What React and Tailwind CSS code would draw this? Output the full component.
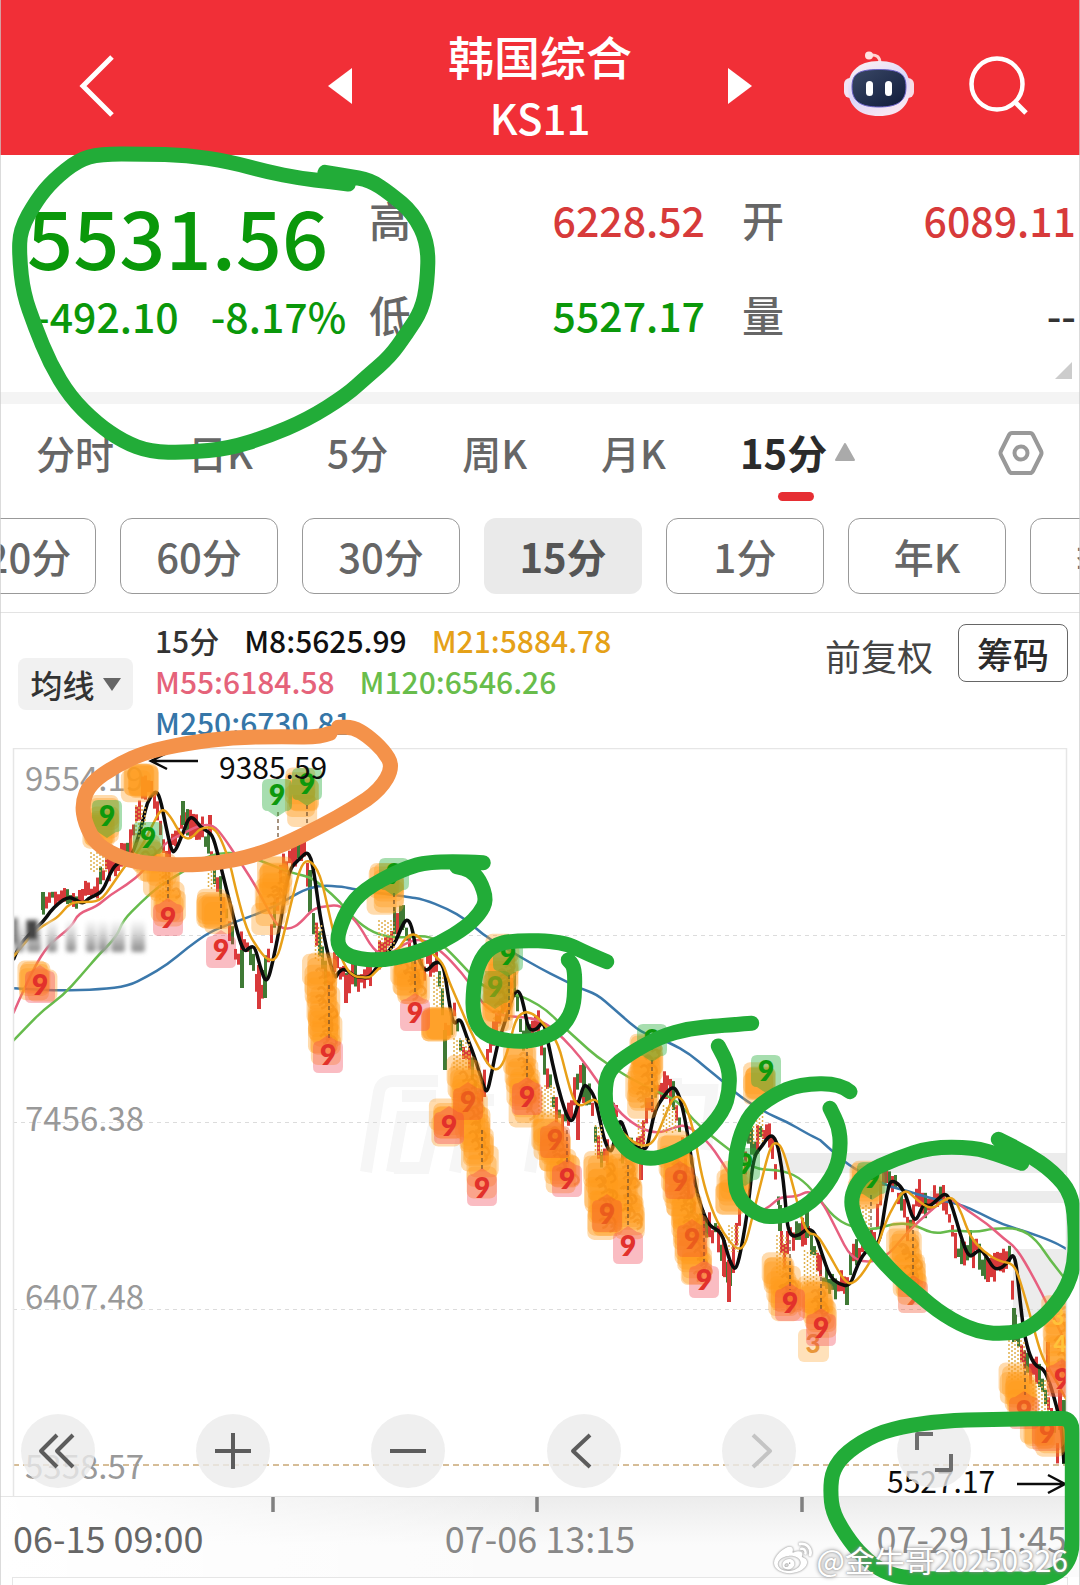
import React from "react";
import { FaWeibo } from "react-icons/fa";

/* ---------- chart data ---------- */

// Every run is stored as [originX, originY, [x, y, ...]] with three units per chart pixel.
const join = (...runs) =>
  runs.flatMap(([ox, oy, list]) => {
    const out = [];
    for (let i = 0; i < list.length; i += 2) out.push([ox + list[i] / 3, oy + list[i + 1] / 3]);
    return out;
  });

// Smooth curve through the midpoints of a polyline.
const smooth = (pts) => {
  let d = `M${pts[0][0].toFixed(1)} ${pts[0][1].toFixed(1)}`;
  for (let i = 1; i < pts.length - 1; i++) {
    const mx = (pts[i][0] + pts[i + 1][0]) / 2;
    const my = (pts[i][1] + pts[i + 1][1]) / 2;
    d += `Q${pts[i][0].toFixed(1)} ${pts[i][1].toFixed(1)} ${mx.toFixed(1)} ${my.toFixed(1)}`;
  }
  const last = pts[pts.length - 1];
  return d + `L${last[0].toFixed(1)} ${last[1].toFixed(1)}`;
};

const M8 = join(
  [0, 730, [40, 690, 55, 650, 90, 610, 130, 575, 150, 545, 175, 520, 205, 500, 225, 508, 250, 522, 265, 505, 290, 495, 310, 480, 330, 430, 350, 400, 378, 392, 400, 370, 430, 270, 440, 220, 465, 180, 480, 200, 500, 300, 515, 365, 525, 365, 545, 320, 565, 265, 580, 262, 600, 290, 625, 305, 640, 320, 660, 400, 680, 480, 700, 560, 730, 670, 750, 650, 765, 650, 780, 710, 800, 765, 820, 690, 845, 560, 865, 420, 900, 385, 925, 362, 940, 410, 960, 560, 985, 680, 1005, 750, 1015, 725, 1035, 715, 1065, 740]],
  [300, 830, [180, 440, 205, 445, 225, 420, 260, 370, 285, 340, 305, 290, 320, 265, 335, 285, 350, 370, 370, 420, 385, 420, 405, 395, 430, 400, 445, 500, 460, 590, 480, 560, 500, 620, 520, 670, 545, 750, 560, 795, 575, 730, 590, 650, 620, 560, 640, 490, 658, 480, 672, 530, 685, 600, 710, 600, 730, 570, 745, 640, 770, 760, 800, 860, 818, 878, 835, 820, 850, 768]],
  [580, 980, [20, 315, 45, 350, 60, 420, 75, 490, 95, 522, 105, 470, 120, 415, 135, 450, 150, 500, 180, 500, 200, 510, 210, 460, 225, 390, 250, 350, 275, 320, 290, 330, 305, 370, 325, 470, 345, 620, 370, 700, 390, 740, 425, 755, 445, 830, 460, 865, 470, 865, 485, 800, 505, 680, 520, 530, 545, 500, 570, 462, 590, 480, 605, 560, 615, 650, 622, 740, 635, 770, 660, 765, 680, 745, 705, 755, 725, 820, 750, 890, 775, 912, 810, 920, 830, 860]],
  [820, 1100, [135, 455, 165, 435, 180, 420, 190, 350, 205, 260, 215, 240, 240, 255, 260, 290, 275, 350, 290, 362, 310, 310, 330, 320, 350, 300, 380, 275, 400, 330, 420, 400, 440, 460, 455, 470, 480, 445, 500, 470, 520, 505, 540, 508, 565, 485, 580, 460, 590, 500, 600, 600, 612, 700, 630, 770, 650, 800, 670, 805, 690, 850, 710, 920, 725, 985, 732, 1090]]
);

const M21 = join(
  [0, 730, [40, 680, 60, 655, 110, 600, 150, 575, 175, 560, 210, 518, 250, 515, 300, 515, 340, 460, 380, 400, 420, 360, 460, 280, 480, 242, 495, 240, 515, 265, 540, 310, 560, 328, 580, 320, 600, 295, 640, 290, 665, 330, 690, 400, 710, 490, 740, 600, 770, 650, 800, 690, 830, 690, 850, 620, 880, 490, 905, 400, 930, 390, 960, 430, 985, 540, 1010, 650, 1040, 720, 1065, 740]],
  [300, 830, [180, 440, 210, 445, 235, 415, 270, 390, 300, 350, 320, 320, 345, 310, 370, 335, 395, 370, 430, 400, 445, 450, 480, 530, 510, 600, 540, 660, 570, 715, 600, 720, 625, 660, 645, 570, 670, 545, 700, 550, 740, 590, 775, 640, 800, 740, 820, 810, 840, 830, 865, 815]],
  [580, 980, [50, 355, 90, 420, 160, 490, 200, 500, 225, 480, 250, 420, 280, 350, 300, 350, 320, 380, 345, 470, 365, 590, 395, 690, 430, 760, 470, 810, 495, 800, 515, 720, 540, 620, 570, 500, 590, 485, 610, 510, 640, 620, 665, 720, 685, 762, 710, 762, 740, 810, 790, 900, 815, 915]],
  [820, 1100, [130, 520, 170, 450, 195, 370, 225, 310, 255, 265, 290, 300, 335, 330, 370, 300, 400, 290, 425, 340, 450, 410, 490, 455, 540, 485, 580, 490, 600, 540, 640, 680, 665, 770, 690, 810, 740, 900]]
);

const M55 = join(
  [0, 730, [40, 850, 75, 770, 115, 690, 150, 640, 215, 590, 235, 550, 290, 530, 330, 495, 380, 465, 430, 425, 490, 340, 560, 305, 600, 285, 640, 285, 670, 320, 710, 380, 750, 440, 790, 510, 830, 590, 870, 598, 900, 580, 940, 535, 980, 528, 1020, 525]],
  [300, 830, [150, 255, 180, 290, 220, 360, 260, 380, 330, 330, 380, 330, 430, 370, 460, 400, 510, 460, 560, 540, 620, 560, 680, 560, 740, 580, 790, 625, 840, 680]],
  [580, 980, [50, 300, 110, 390, 170, 440, 230, 462, 290, 440, 320, 435, 380, 480, 430, 550, 480, 640, 530, 700, 570, 680, 600, 650, 650, 650, 690, 630, 730, 670, 770, 750]],
  [820, 1100, [95, 478, 160, 488, 210, 460, 250, 410, 300, 360, 340, 325, 385, 290, 440, 330, 500, 370, 550, 415, 590, 445, 640, 530, 690, 630, 742, 740]]
);

const M120 = join(
  [0, 730, [40, 932, 80, 890, 130, 840, 190, 795, 240, 740, 300, 670, 350, 620, 370, 570, 420, 520, 480, 465, 550, 425, 610, 385, 660, 368, 720, 370, 790, 395, 870, 428, 930, 440, 970, 470]],
  [300, 830, [120, 215, 160, 265, 220, 310, 290, 325, 390, 315, 440, 355, 500, 420, 560, 480, 640, 490, 690, 510, 740, 540, 790, 590]],
  [580, 980, [0, 185, 50, 230, 110, 270, 160, 300, 230, 335, 290, 360, 340, 420, 390, 465, 450, 510, 520, 568, 610, 570, 670, 600]],
  [820, 1100, [0, 300, 40, 350, 90, 380, 160, 390, 220, 370, 280, 372, 340, 403, 400, 390, 470, 397, 520, 385, 600, 385, 650, 420, 690, 480, 742, 545]]
);

const M250 = join(
  [0, 730, [40, 775, 100, 778, 180, 782, 300, 778, 385, 768, 440, 740, 500, 705, 560, 655, 630, 605, 700, 578, 790, 545, 850, 515, 910, 480, 960, 466, 1030, 470]],
  [300, 830, [160, 178, 320, 200, 370, 208, 440, 235, 500, 270, 550, 315, 600, 345, 660, 380, 720, 415, 780, 445]],
  [580, 980, [0, 25, 50, 42, 100, 85, 150, 130, 190, 160, 270, 188, 330, 222, 380, 265, 430, 305, 480, 350, 560, 400, 620, 425, 680, 460, 720, 480]],
  [820, 1100, [0, 120, 50, 165, 100, 205, 200, 258, 260, 272, 330, 295, 420, 312, 480, 340, 550, 375, 620, 395, 700, 425, 742, 448]]
);

const noise = (n) => {
  const s = Math.sin(n * 127.1 + 11.7) * 43758.5453;
  return s - Math.floor(s);
};

const valueAt = (pts, x) => {
  for (let i = 1; i < pts.length; i++) {
    if (pts[i][0] >= x) {
      const [x0, y0] = pts[i - 1];
      const [x1, y1] = pts[i];
      return y0 + ((y1 - y0) * (x - x0)) / (x1 - x0 || 1);
    }
  }
  return pts[pts.length - 1][1];
};

const candles = [];
for (let i = 0, x = 42; x < 1058; x += 3, i++) {
  const now = valueAt(M8, x + 5);
  const slope = valueAt(M8, x + 7) - valueAt(M8, x + 3);
  const calm = x < 95;
  const h = calm ? 5 + noise(i) * 10 : 8 + noise(i) * 21;
  const mid = now + slope * 0.9 + (noise(i + 500) - 0.5) * (calm ? 8 : 14) - (calm ? 4 : 0);
  const red = noise(i + 900) > (slope < 0 ? 0.2 : 0.5);
  candles.push({ x, y: mid - h / 2, h, red });
}

const spikes = [
  [43, 892, 18, 0], [183, 801, 24, 0], [210, 815, 18, 1], [242, 950, 38, 0], [259, 965, 44, 1],
  [265, 970, 28, 0], [310, 870, 42, 0], [346, 975, 28, 1], [445, 1030, 40, 0], [578, 1100, 40, 1],
  [584, 1063, 34, 0], [666, 1077, 22, 1], [641, 1160, 20, 1], [729, 1260, 42, 1], [724, 1240, 36, 1],
  [847, 1285, 20, 0], [780, 1205, 26, 0], [807, 1210, 28, 0], [1014, 1308, 34, 0], [1048, 1342, 30, 1],
  [1064, 1400, 64, 0], [1060, 1390, 40, 1], [988, 1260, 22, 1], [402, 908, 22, 0],
];

// Stacked signal tags: from (x1, y1) to (x2, y2).
const stacks = [
  [31, 974, 39, 984, 5], [105, 812, 101, 832, 5], [97, 834, 100, 828, 2], [142, 778, 138, 784, 6],
  [145, 848, 166, 888, 9], [168, 900, 169, 914, 4], [213, 907, 216, 915, 7], [303, 782, 300, 808, 6],
  [276, 873, 272, 895, 9], [270, 900, 267, 916, 3], [319, 968, 326, 1046, 18], [388, 878, 385, 898, 7],
  [406, 965, 412, 990, 9], [440, 1022, 438, 1028, 6], [502, 952, 497, 1018, 15], [463, 1072, 478, 1152, 20],
  [480, 1150, 481, 1180, 4], [446, 1117, 449, 1127, 5], [520, 1054, 527, 1110, 13], [546, 1127, 564, 1176, 15],
  [600, 1167, 605, 1226, 16], [622, 1160, 629, 1222, 15], [648, 1048, 641, 1100, 13], [672, 1146, 698, 1272, 30],
  [758, 1080, 757, 1087, 5], [733, 1180, 731, 1199, 7], [780, 1267, 787, 1305, 11], [813, 1290, 819, 1320, 9],
  [867, 1174, 866, 1194, 7], [903, 1240, 912, 1288, 12], [1058, 1312, 1061, 1380, 12], [1016, 1380, 1021, 1404, 8],
  [1038, 1425, 1052, 1440, 7],
];

const tags = [
  [40, 986, "9", "r"], [168, 919, "9", "r"], [221, 951, "9", "r"], [328, 1056, "9", "r"], [415, 1014, "9", "r"],
  [449, 1127, "9", "r"], [482, 1189, "9", "r"], [527, 1098, "9", "r"], [555, 1141, "9", "f"], [567, 1180, "9", "r"],
  [468, 1103, "9", "f"], [607, 1215, "9", "f"], [628, 1247, "9", "r"], [680, 1182, "9", "f"], [692, 1240, "9", "f"],
  [704, 1281, "9", "r"], [790, 1304, "9", "r"], [821, 1329, "9", "r"], [913, 1296, "9", "f"], [1062, 1380, "9", "r"],
  [1024, 1412, "9", "f"], [1047, 1434, "9", "f"],
  [107, 817, "9", "g"], [148, 839, "9", "g"], [277, 796, "9", "g"], [307, 785, "9", "g"], [394, 875, "9", "g"],
  [508, 956, "9", "g"], [495, 988, "9", "h"], [652, 1041, "9", "g"], [766, 1072, "9", "g"], [745, 1165, "9", "g"],
  [872, 1179, "9", "g"],
];

const tagStyle = {
  r: { fill: "#ef3b4b", op: 0.34, ink: "#e2312b", inkOp: 1 },
  f: { fill: "#f0502d", op: 0.36, ink: "#e8531c", inkOp: 0.8 },
  g: { fill: "#22ac38", op: 0.4, ink: "#0d990d", inkOp: 1 },
  h: { fill: "#55a020", op: 0.35, ink: "#5b9a12", inkOp: 0.7 },
};

const dotted = [
  [100, 852, 20, 6], [142, 805, 30, 4], [213, 865, 22, 3], [320, 925, 36, 3], [388, 920, 30, 6],
  [440, 975, 30, 4], [463, 1038, 30, 6], [548, 1085, 30, 6], [600, 1125, 30, 3], [643, 1120, 28, 3],
  [671, 1105, 28, 5], [758, 1108, 36, 5], [735, 1225, 25, 4], [783, 1235, 38, 4], [812, 1250, 34, 5],
  [1018, 1340, 40, 6], [1042, 1380, 40, 6], [866, 1205, 26, 4], [166, 870, 30, 4],
];

const leaders = [
  [278, 812, 852], [307, 805, 835], [168, 880, 900], [221, 890, 930], [329, 985, 1038], [394, 893, 925],
  [415, 960, 995], [482, 1130, 1170], [509, 975, 1020], [527, 1045, 1080], [567, 1130, 1162], [628, 1165, 1228],
  [652, 1060, 1110], [704, 1210, 1262], [790, 1240, 1290], [821, 1270, 1310], [871, 1195, 1235], [913, 1230, 1275],
  [1025, 1350, 1395],
];

const Chart = () => (
  <svg viewBox="0 748 1080 748" className="block w-full" role="img" aria-label="15分 K线图">
    <defs>
      <clipPath id="plot">
        <rect x="13" y="748" width="1054" height="748" />
      </clipPath>
      <filter id="smudge" x="-20%" y="-20%" width="140%" height="140%">
        <feGaussianBlur stdDeviation="2" />
      </filter>
      <linearGradient id="fade" x1="0" y1="0" x2="0" y2="1">
        <stop offset="0" stopColor="#f4f4f4" stopOpacity="0.6" />
        <stop offset="0.7" stopColor="#b0b0b0" />
        <stop offset="1" stopColor="#8c8c8c" />
      </linearGradient>
    </defs>

    <g fill="none" stroke="#f6f6f6" strokeWidth="12">
      <path d="M366 1172L379 1092Q381 1081 393 1081H438M392 1172L402 1117H436L424 1168H394M402 1096H436M455 1172L468 1108Q470 1100 480 1100H494M530 1172L540 1110M660 1090H712L706 1150M676 1078V1106" />
    </g>

    <g fill="#ececec">
      <rect x="780" y="1153" width="287" height="20" />
      <rect x="930" y="1191" width="137" height="12" />
      <rect x="1013" y="1249" width="54" height="68" />
    </g>

    <g stroke="#dcdcdc" strokeWidth="1" strokeDasharray="4 4">
      <path d="M13 935.500H1067M13 1122.500H1067M13 1309.500H1067" />
    </g>
    <path d="M13 1465H1067" stroke="#c9a876" strokeWidth="1.500" strokeDasharray="6 4" />

    <g fontFamily="Noto Sans CJK SC, sans-serif" fontSize="33" fill="#999999">
      <text x="25" y="791">9554.19</text>
      <text x="25" y="1131">7456.38</text>
      <text x="25" y="1309">6407.48</text>
      <text x="25" y="1479">5358.57</text>
    </g>

    <g clipPath="url(#plot)">
      {candles.map((c) => (
        <rect key={c.x} x={c.x} y={c.y} width="3" height={c.h} fill={c.red ? "#d8393a" : "#3f7a35"} />
      ))}
      {spikes.map(([x, y, h, red]) => (
        <rect key={x + "-" + y} x={x - 2} y={y} width="4" height={h} fill={red ? "#d8393a" : "#3f7a35"} />
      ))}

      <g fill="none" strokeLinejoin="round">
        <path d={smooth(M250)} stroke="#3b78ab" strokeWidth="2.500" />
        <path d={smooth(M120)} stroke="#66bb4c" strokeWidth="2.500" />
        <path d={smooth(M55)} stroke="#e75f7f" strokeWidth="2.500" />
        <path d={smooth(M8)} stroke="#0c0c0c" strokeWidth="3.500" />
        <path d={smooth(M21)} stroke="#e8a018" strokeWidth="2.500" />
      </g>

      <g filter="url(#smudge)">
        {[14, 27, 47, 66, 86, 98, 111, 131].map((x, i) => (
          <rect key={x} x={x} y="921" width={i === 1 ? 14 : i > 5 ? 14 : 10} height="31" rx="3" fill="url(#fade)" />
        ))}
        <rect x="12" y="918" width="6" height="26" fill="#777777" />
        <rect x="26" y="920" width="12" height="20" fill="#444444" />
      </g>

      {dotted.map(([x, y, h, n]) => (
        <g key={x + "-" + y}>
          {Array.from({ length: n }, (_, i) => (
            <path
              key={i}
              d={`M${x - n * 1.5 + i * 3} ${y + (i % 2) * 2}v${h}`}
              stroke="#dfb04c"
              strokeWidth="1.500"
              strokeDasharray="2 2"
            />
          ))}
        </g>
      ))}

      {stacks.map(([x1, y1, x2, y2, n], s) => (
        <g key={s} fill="#ff9a1c" fillOpacity="0.36">
          {Array.from({ length: n }, (_, i) => {
            const t = n > 1 ? i / (n - 1) : 0;
            const dx = (noise(s * 31 + i) - 0.5) * 7;
            const dy = (noise(s * 53 + i + 7) - 0.5) * 7;
            return (
              <rect
                key={i}
                x={x1 + (x2 - x1) * t - 15 + dx}
                y={y1 + (y2 - y1) * t - 16 + dy}
                width="30"
                height="32"
                rx="7"
              />
            );
          })}
        </g>
      ))}

      <g fill="none" stroke="#f08a10" strokeWidth="2.500" strokeOpacity="0.45">
        {stacks
          .filter((s) => s[4] > 8)
          .map(([x1, y1, x2, y2, n], s) => (
            <path
              key={s}
              d={Array.from({ length: n }, (_, i) => {
                const t = i / (n - 1);
                const x = x1 + (x2 - x1) * t + (noise(s + i * 3) - 0.5) * 14;
                const y = y1 + (y2 - y1) * t + (noise(s * 2 + i) - 0.5) * 6;
                return `M${x.toFixed(1)} ${y.toFixed(1)}q4 -5 7 0t-4 7`;
              }).join("")}
            />
          ))}
      </g>

      <g stroke="#6b4a28" strokeWidth="1.200" strokeDasharray="4 3">
        {leaders.map(([x, a, b]) => (
          <path key={x + "-" + a} d={`M${x} ${a}V${b}`} />
        ))}
      </g>

      <g fontFamily="Lato, Noto Sans CJK SC, sans-serif" fontWeight="900" textAnchor="middle">
        <g>
          <rect x="798" y="1329" width="31" height="33" rx="6" fill="#ff9a1c" fillOpacity="0.300" />
          <text x="813" y="1353" fontSize="26" fill="#e9973a">3</text>
        </g>
        {tags.map(([x, y, label, kind]) => {
          const t = tagStyle[kind];
          return (
            <g key={x + "-" + y}>
              <path
                d={
                  kind === "g" || kind === "h"
                    ? `M${x - 9} ${y - 17}h18q6 0 6 6v20q0 6-6 6l-9 6l-9-6q-6 0-6-6v-20q0-6 6-6z`
                    : `M${x - 9} ${y - 15}l9-6l9 6q6 0 6 6v20q0 6-6 6h-18q-6 0-6-6v-20q0-6 6-6z`
                }
                fill={t.fill}
                fillOpacity={t.op}
              />
              <text x={x} y={y + 9} fontSize="28" fontWeight="800" fill={t.ink} fillOpacity={t.inkOp}>
                {label}
              </text>
            </g>
          );
        })}
        <text x="1058" y="1325" fontSize="22" fill="#ffc23a">3</text>
        <text x="1060" y="1352" fontSize="22" fill="#ffc23a">4</text>
      </g>
    </g>

    <g fill="none" stroke="#0c0c0c" strokeWidth="2.500">
      <path d="M198 761H151M167 753L151 761L167 769" />
      <path d="M1017 1484H1065M1048 1475L1065 1484L1048 1493" />
    </g>
    <g fontFamily="Noto Sans CJK SC, sans-serif" fontSize="30" fill="#0c0c0c">
      <text x="219" y="779">9385.59</text>
      <text x="887" y="1493">5527.17</text>
    </g>

    <path d="M13.500 1496V748.500H1066.500V1496" fill="none" stroke="#e6e6e6" strokeWidth="1.500" />
  </svg>
);

/* ---------- hand-drawn marks ---------- */

const marks = [
  join([0, 140, [1045, 132, 990, 125, 900, 115, 800, 95, 690, 65, 560, 45, 430, 42, 300, 42, 235, 60, 160, 120, 110, 180, 60, 270, 58, 350, 70, 460, 105, 560, 150, 670, 210, 770, 290, 850, 370, 905, 450, 935, 560, 938, 690, 925, 800, 890, 920, 840, 1040, 765, 1100, 710, 1170, 650, 1220, 580, 1265, 510, 1282, 430, 1285, 310, 1240, 220, 1170, 160, 1110, 120, 1040, 108, 975, 97]]),
  join([300, 830, [550, 98, 400, 90, 300, 120, 190, 180, 140, 240, 110, 320, 120, 360, 160, 385, 240, 392, 330, 375, 420, 340, 500, 290, 540, 250, 560, 210, 540, 150, 510, 120, 470, 110]]),
  join([300, 830, [920, 395, 860, 370, 790, 335, 640, 330, 570, 350, 535, 400, 520, 470, 518, 560, 550, 615, 630, 635, 710, 632, 780, 600, 820, 540, 825, 460, 822, 410, 805, 390]]),
  join([580, 980, [515, 130, 420, 137, 330, 145, 240, 170, 150, 220, 85, 270, 73, 340, 85, 420, 135, 510, 200, 540, 270, 525, 360, 475, 430, 395, 449, 330, 447, 260, 415, 198]]),
  join([580, 980, [810, 335, 780, 310, 660, 312, 580, 345, 510, 400, 475, 480, 463, 570, 470, 650, 530, 705, 590, 712, 640, 700, 710, 655, 770, 570, 782, 500, 777, 440, 750, 385]]),
  join([820, 1100, [605, 190, 540, 165, 460, 142, 330, 142, 230, 175, 130, 220, 90, 290, 105, 360, 150, 440, 220, 520, 290, 580, 370, 645, 470, 697, 570, 702, 640, 680, 720, 600, 762, 510, 767, 400, 757, 285, 700, 215, 620, 160, 535, 118]]),
  join([820, 1100, [757, 1000, 757, 956, 700, 955, 560, 958, 400, 960, 270, 975, 170, 1000, 80, 1055, 38, 1110, 31, 1170, 38, 1240, 90, 1325, 140, 1380, 190, 1415, 260, 1436, 500, 1438, 757, 1436, 757, 1200, 757, 1000]]),
];

const orangeMark = join([0, 730, [990, 10, 960, 22, 850, 20, 700, 22, 560, 40, 440, 65, 350, 105, 270, 160, 246, 220, 255, 280, 290, 345, 370, 388, 450, 402, 560, 405, 650, 400, 750, 380, 850, 345, 960, 290, 1060, 235, 1140, 180, 1180, 110, 1150, 60, 1100, 15, 1060, -8, 1015, -8]]);

const Marks = () => (
  <svg
    viewBox="0 0 1080 1585"
    preserveAspectRatio="none"
    className="pointer-events-none absolute inset-0 h-full w-full"
    aria-hidden="true"
  >
    <g fill="none" strokeWidth="15" strokeLinecap="round" strokeLinejoin="round">
      {marks.map((m, i) => (
        <path key={i} d={smooth(m)} stroke="#22ac38" />
      ))}
      <path d={smooth(orangeMark)} stroke="#f4924a" />
    </g>
  </svg>
);

/* ---------- icons ---------- */

const Robot = () => (
  <svg viewBox="0 0 72 66" className="h-[66px] w-[72px]" aria-hidden="true">
    <defs>
      <linearGradient id="shell" x1="0" y1="0" x2="0.500" y2="1">
        <stop offset="0" stopColor="#fff4f4" />
        <stop offset="0.600" stopColor="#dcd6f8" />
        <stop offset="1" stopColor="#f7e6f2" />
      </linearGradient>
      <linearGradient id="visor" x1="0" y1="0" x2="1" y2="1">
        <stop offset="0" stopColor="#3a4866" />
        <stop offset="1" stopColor="#101b3a" />
      </linearGradient>
    </defs>
    <path d="M27 4Q37 3 37 12" fill="none" stroke="#ffd3d3" strokeWidth="3" />
    <circle cx="26" cy="4.500" r="4" fill="#ffe3e3" />
    <rect x="1" y="27" width="12" height="20" rx="6" fill="#f3e3f3" />
    <rect x="59" y="27" width="12" height="20" rx="6" fill="#f7dce6" />
    <path d="M36 10C58 10 67 22 67 37C67 55 56 65 36 65C16 65 5 55 5 37C5 22 14 10 36 10Z" fill="url(#shell)" />
    <path d="M36 18.500C57 18.500 63 23 63 36C63 50 55 56 36 56C17 56 9 50 9 36C9 23 15 18.500 36 18.500Z" fill="url(#visor)" stroke="#6a62c8" strokeWidth="1" />
    <rect x="23" y="30" width="7" height="15" rx="3.500" fill="#fff" />
    <rect x="42" y="30" width="7" height="15" rx="3.500" fill="#fff" />
  </svg>
);

const toolIcons = [
  ["快退", "M36 21L20 37L36 53M52 21L36 37L52 53", "#5c5c5c"],
  ["放大", "M37 19V55M19 37H55", "#5c5c5c"],
  ["缩小", "M19 37H55", "#5c5c5c"],
  ["左移", "M43 21L26 37L43 53", "#5c5c5c"],
  ["右移", "M31 21L48 37L31 53", "#c4c4c4"],
  ["全屏", "M36 20H20V36M54 40V56H38", "#6e6e6e"],
];

const tabs = ["分时", "日K", "5分", "周K", "月K"];
const periods = ["120分", "60分", "30分", "15分", "1分", "年K", "季K"];

const Quote = ({ label, value, tone }) => (
  <div className="flex items-center justify-between">
    <dt className="text-[42px] text-[#666666]">{label}</dt>
    <dd className={tone}>{value}</dd>
  </div>
);

export default function App() {
  return (
    <main className="relative w-full overflow-hidden bg-white font-['Noto_Sans_CJK_SC',sans-serif] whitespace-nowrap after:pointer-events-none after:absolute after:inset-0 after:border-x after:border-[#cccccc]/70">
      <header className="flex h-[155px] items-center justify-between bg-[#f12f37] pt-4 pr-[51px] pl-[78px] text-white">
        <button type="button" aria-label="返回">
          <svg viewBox="0 0 38 62" className="h-[62px] w-[38px]" fill="none" stroke="#fff" strokeWidth="5">
            <path d="M34 2L5 31L34 60" />
          </svg>
        </button>
        <div className="ml-[121px] flex items-center gap-[96px]">
          <button type="button" aria-label="上一个">
            <svg viewBox="0 0 24 36" className="h-9 w-6" fill="#fff"><path d="M24 0V36L0 18Z" /></svg>
          </button>
          <h1 className="pt-px text-center text-[46px] leading-[62px] font-medium">
            韩国综合
            <span className="block text-[42px]">KS11</span>
          </h1>
          <button type="button" aria-label="下一个">
            <svg viewBox="0 0 24 36" className="h-9 w-6" fill="#fff"><path d="M0 0V36L24 18Z" /></svg>
          </button>
        </div>
        <div className="flex items-center gap-[54px]">
          <button type="button" aria-label="智能助手" className="pb-1"><Robot /></button>
          <button type="button" aria-label="搜索">
            <svg viewBox="0 0 60 60" className="size-[60px]" fill="none" stroke="#fff" strokeWidth="4.500">
              <circle cx="28" cy="28" r="25.500" />
              <path d="M46 46L57 57" strokeWidth="5" />
            </svg>
          </button>
        </div>
      </header>

      <section className="relative grid h-[237px] grid-cols-[305fr_336fr_338fr] gap-x-[37px] pt-8 pl-[27px] text-[41px] leading-[64px] font-medium">
        <div className="min-w-0 text-[#0a980a]">
          <p className="text-[81px] leading-[96px]">5531.56</p>
          <p className="flex gap-8 pl-2">
            <span>-492.10</span>
            <span>-8.17%</span>
          </p>
        </div>
        <dl className="space-y-[31px]">
          <Quote label="高" value="6228.52" tone="text-[#d73a3a]" />
          <Quote label="低" value="5527.17" tone="text-[#0a980a]" />
        </dl>
        <dl className="space-y-[31px] pr-1">
          <Quote label="开" value="6089.11" tone="text-[#d73a3a]" />
          <Quote label="量" value="--" tone="text-[#333333]" />
        </dl>
        <svg viewBox="0 0 17 17" className="absolute right-2 bottom-[13px] size-[17px]" fill="#cccccc" aria-hidden="true">
          <path d="M17 0V17H0Z" />
        </svg>
      </section>

      <div className="h-3 bg-[#f4f4f4]" />

      <nav className="flex h-[114px] items-start justify-between pt-5 pr-9 pl-9 text-[39px] leading-[56px] text-[#666666]">
        <div className="flex items-start gap-[74px]">
          {tabs.map((t) => (
            <button key={t} type="button" className="font-medium">{t}</button>
          ))}
          <button type="button" className="flex flex-col items-center font-bold text-[#2b2b2b]">
            <span className="flex items-center gap-2 text-[40px]">
              15分
              <svg viewBox="0 0 20 18" className="h-[18px] w-5" fill="#aaaaaa" stroke="#aaaaaa" strokeWidth="2" strokeLinejoin="round" aria-hidden="true">
                <path d="M10 1L19 17H1Z" />
              </svg>
            </span>
            <span className="mt-3 mr-1 h-[9px] w-9 rounded-full bg-[#e62e33]" />
          </button>
        </div>
        <button type="button" aria-label="设置" className="pt-[6px]">
          <svg viewBox="0 0 46 46" className="size-[46px]" fill="none" stroke="#999999" strokeWidth="4" strokeLinejoin="round">
            <path d="M14 3H32Q34 3 35 5L43 21Q44 23 43 25L35 41Q34 43 32 43H14Q12 43 11 41L3 25Q2 23 3 21L11 5Q12 3 14 3Z" />
            <circle cx="23" cy="23" r="6.500" />
          </svg>
        </button>
      </nav>

      <div className="-ml-[62px] flex h-[94px] gap-6 overflow-hidden">
        {periods.map((p) =>
          p === "15分" ? (
            <button key={p} type="button" aria-pressed="true" className="h-[76px] w-[158px] shrink-0 rounded-xl bg-[#eaeaea] text-[40px] font-bold text-[#555555]">{p}</button>
          ) : (
            <button key={p} type="button" className="h-[76px] w-[158px] shrink-0 rounded-xl border border-[#999999] text-[40px] font-medium text-[#666666]">{p}</button>
          )
        )}
      </div>

      <section className="flex h-[136px] items-start border-t border-[#e3e3e3] pr-3 pl-[18px]">
        <button type="button" aria-haspopup="listbox" className="mt-[45px] flex h-[52px] w-[115px] shrink-0 items-center justify-center gap-2 rounded-lg bg-[#f1f1f1] text-[32px] leading-[52px] font-medium text-[#333333]">
          均线
          <svg viewBox="0 0 18 13" className="h-[13px] w-[18px]" fill="#666666" aria-hidden="true"><path d="M0 0H18L9 13Z" /></svg>
        </button>
        <div className="ml-[22px] flex w-[480px] flex-wrap gap-x-[25px] pt-[7px] text-[30px] leading-[41px] font-medium">
          <span className="text-[#333333]">15分</span>
          <span className="text-[#111111]">M8:5625.99</span>
          <span className="text-[#e5a118]">M21:5884.78</span>
          <span className="text-[#e5637a]">M55:6184.58</span>
          <span className="text-[#68bd4b]">M120:6546.26</span>
          <span className="text-[#3576a8]">M250:6730.81</span>
        </div>
        <div className="mt-[11px] ml-auto flex items-center gap-[25px] text-[36px] leading-[54px] text-[#444444]">
          <span className="pt-1">前复权</span>
          <button type="button" className="h-[58px] w-[110px] rounded-lg border border-[#666666] font-medium text-[#2b2b2b]">筹码</button>
        </div>
      </section>

      <section className="relative">
        <Chart />
        <div className="absolute inset-x-0 bottom-2 flex justify-between pr-[109px] pl-[21px]">
          {toolIcons.map(([name, d, color]) => (
            <button key={name} type="button" aria-label={name} className="size-[74px] rounded-full bg-[#ebebeb]/80">
              <svg viewBox="0 0 74 74" className="size-[74px]" fill="none" stroke={color} strokeWidth="4" strokeLinejoin="round">
                <path d={d} />
              </svg>
            </button>
          ))}
        </div>
      </section>

      <section className="relative flex h-[81px] items-center justify-between border-t border-[#e6e6e6] bg-[linear-gradient(to_right,#ffffff,transparent_50%),linear-gradient(#ececec,#fbfbfb_60%)] px-[13px] text-[36px] text-[#888888]">
        <svg viewBox="0 0 1080 16" preserveAspectRatio="none" className="absolute inset-x-0 top-0 h-4 w-full" aria-hidden="true">
          <path d="M273 0V15M537 0V15M802 0V15" stroke="#808080" strokeWidth="3.500" />
        </svg>
        <span className="text-[#666666]">06-15 09:00</span>
        <span>07-06 13:15</span>
        <span>07-29 11:45</span>
      </section>
      <div className="mx-3 h-2 border border-b-0 border-[#e6e6e6]" />

      <Marks />

      <p className="absolute right-3 bottom-[6px] flex items-center gap-1 text-[30px] leading-[40px] text-white [text-shadow:0_0_4px_#888888,0_0_2px_#999999]">
        <FaWeibo className="size-[38px] drop-shadow-[0_0_1px_#777777]" aria-hidden="true" />
        @金牛哥20250326
      </p>
    </main>
  );
}
